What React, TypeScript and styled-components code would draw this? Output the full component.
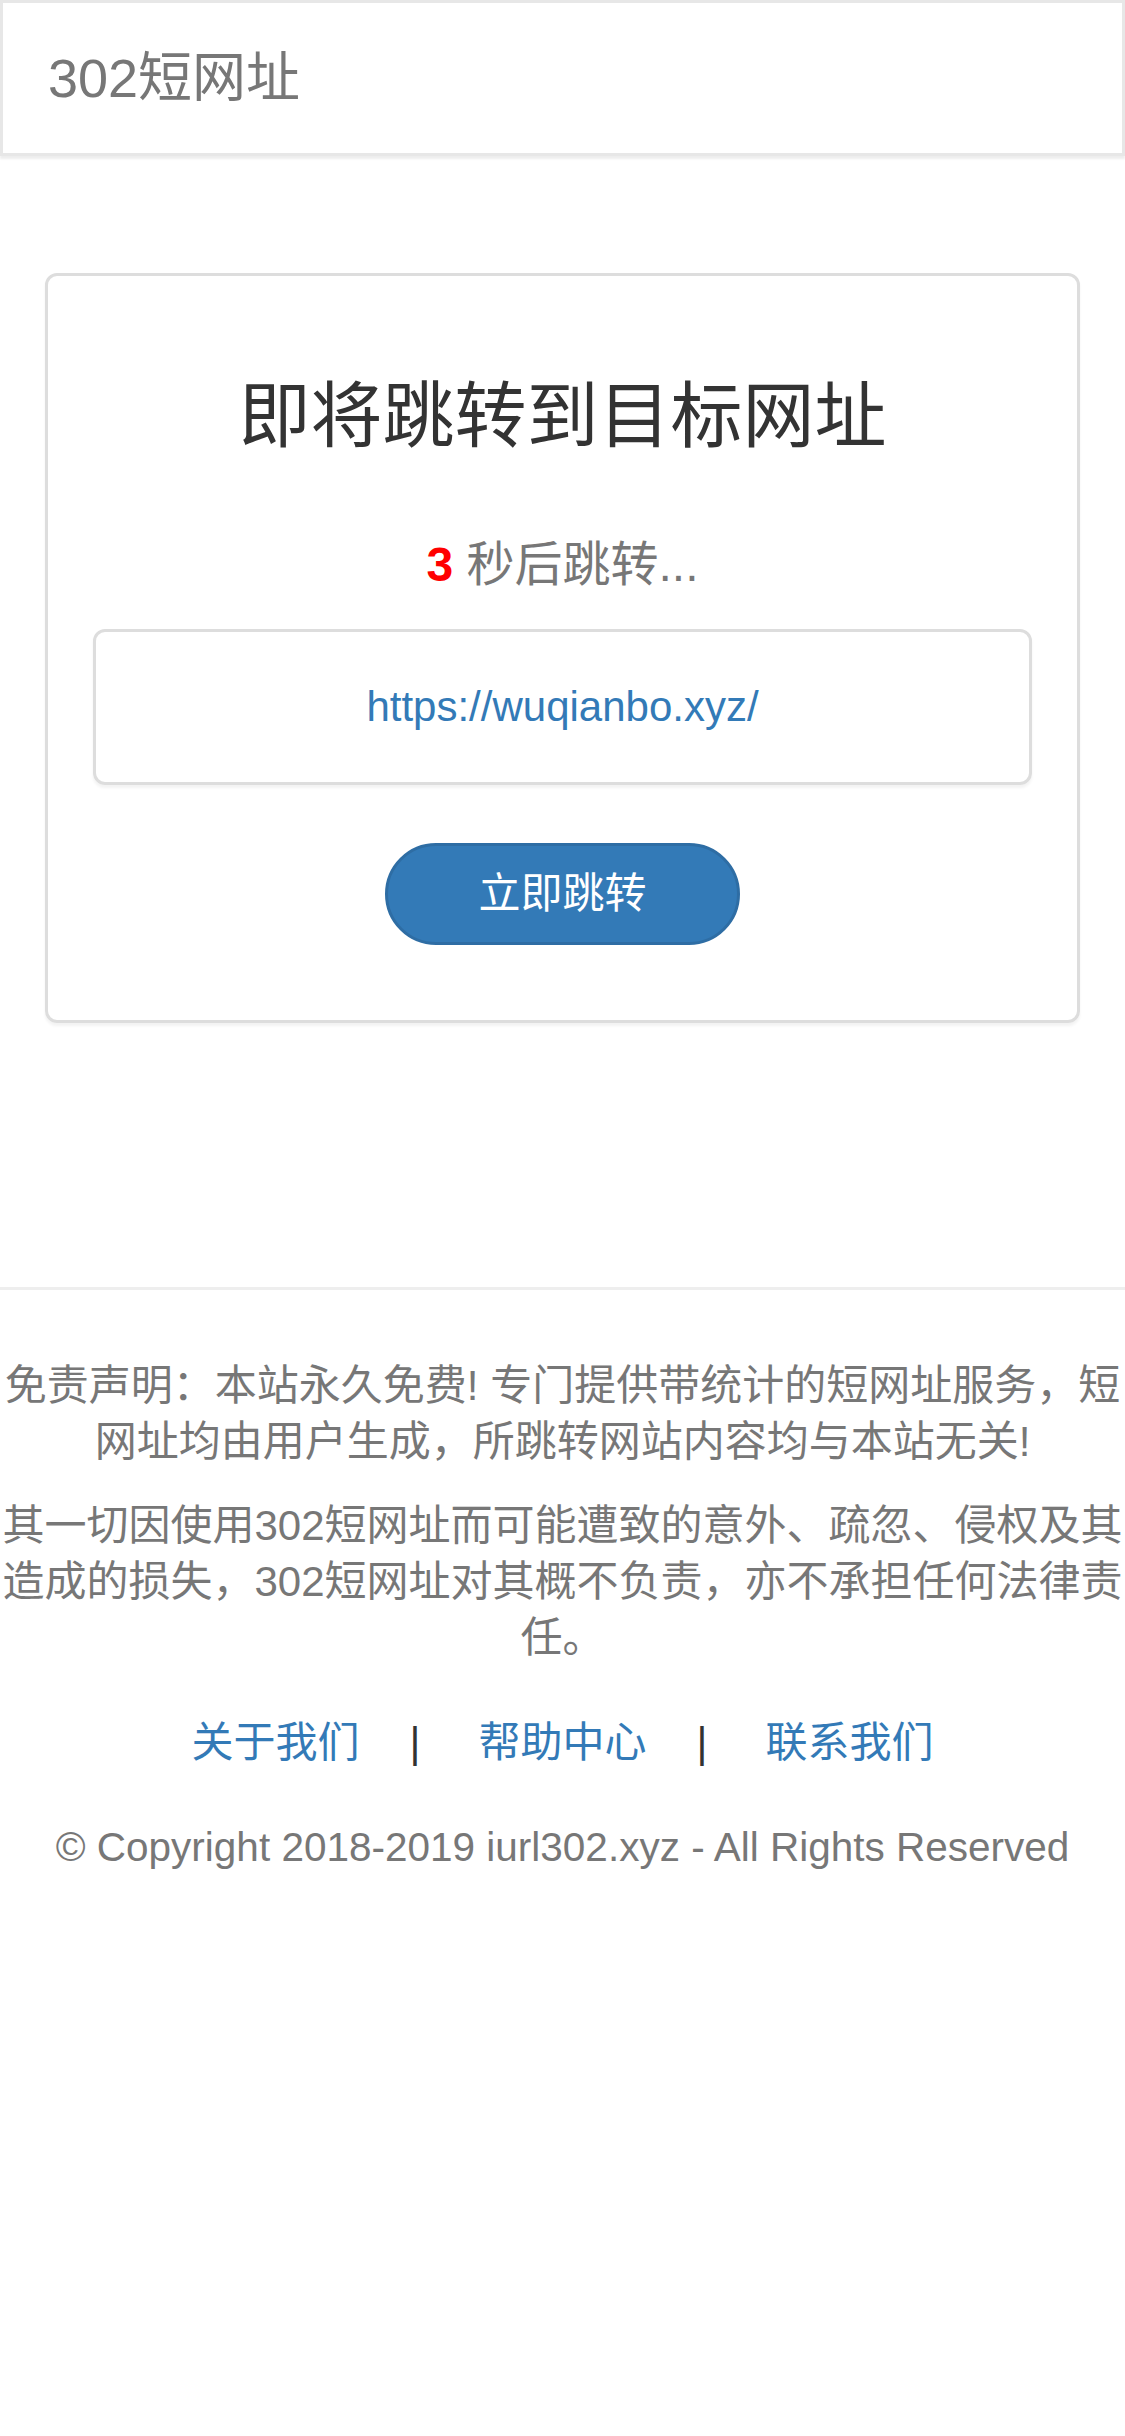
import React from "react";
import styled, { createGlobalStyle } from "styled-components";

const GlobalStyle = createGlobalStyle`
  * { box-sizing: border-box; }
  html, body {
    margin: 0;
    padding: 0;
    background: #fff;
  }
  body {
    font-family: "Liberation Sans", "Noto Sans CJK SC", sans-serif;
    font-size: 42px;
    line-height: 60px;
    color: #333;
  }
`;

const Navbar = styled.nav`
  height: 156px;
  border: 3px solid #e7e7e7;
  background: #fff;
  display: flex;
  align-items: center;
  padding: 0 45px;
  box-shadow: 0 3px 2px rgba(0, 0, 0, 0.07);
`;

const Brand = styled.a`
  font-size: 54px;
  line-height: 60px;
  color: #777;
  text-decoration: none;
`;

const Main = styled.main`
  padding: 117px 45px 0;
`;

const Card = styled.section`
  border: 3px solid #ddd;
  border-radius: 12px;
  box-shadow: 0 3px 3px rgba(0, 0, 0, 0.05);
  padding: 101px 45px 75px;
  display: flex;
  flex-direction: column;
  align-items: center;
`;

const Title = styled.h2`
  margin: 0;
  font-size: 72px;
  line-height: 79px;
  font-weight: 400;
  color: #333;
  text-align: center;
`;

const Countdown = styled.p`
  margin: 75px 0 0;
  font-size: 48px;
  line-height: 68px;
  color: #777;
  text-align: center;
`;

const Seconds = styled.span`
  color: #f00;
  font-weight: 700;
`;

const UrlBox = styled.div`
  margin-top: 30px;
  width: 100%;
  border: 3px solid #ddd;
  border-radius: 12px;
  box-shadow: 0 3px 3px rgba(0, 0, 0, 0.05);
  padding: 45px;
  text-align: center;
  font-size: 42px;
  line-height: 60px;
`;

const Link = styled.a`
  color: #337ab7;
  text-decoration: none;
`;

const GoButton = styled.button`
  margin-top: 58px;
  height: 102px;
  padding: 0 90px;
  border: 3px solid #2e6da4;
  border-radius: 51px;
  background: #337ab7;
  color: #fff;
  font-family: inherit;
  font-size: 42px;
  line-height: 60px;
  cursor: pointer;
`;

const Footer = styled.footer`
  margin-top: 264px;
  border-top: 3px solid #eee;
  padding-top: 68px;
  text-align: center;
  color: #777;
`;

const Disclaimer = styled.p`
  margin: 0 0 28px;
  font-size: 42px;
  line-height: 56px;
  color: #777;
`;

const LinkRow = styled.div`
  margin-top: 47px;
  display: flex;
  justify-content: center;
  align-items: center;
  font-size: 42px;
  line-height: 60px;
`;

const Separator = styled.span`
  color: #333;
  margin: 0 58px 0 50px;
`;

const Copyright = styled.p`
  margin: 44px 0 0;
  font-size: 40.5px;
  line-height: 60px;
  color: #777;
`;

export default function App() {
  return (
    <>
      <GlobalStyle />
      <Navbar>
        <Brand href="#">302短网址</Brand>
      </Navbar>
      <Main>
        <Card>
          <Title>即将跳转到目标网址</Title>
          <Countdown>
            <Seconds>3</Seconds> 秒后跳转...
          </Countdown>
          <UrlBox>
            <Link href="#">https://wuqianbo.xyz/</Link>
          </UrlBox>
          <GoButton type="button">立即跳转</GoButton>
        </Card>
      </Main>
      <Footer>
        <Disclaimer>
          免责声明：本站永久免费! 专门提供带统计的短网址服务，短网址均由用户生成，所跳转网站内容均与本站无关!
        </Disclaimer>
        <Disclaimer>
          其一切因使用302短网址而可能遭致的意外、疏忽、侵权及其造成的损失，302短网址对其概不负责，亦不承担任何法律责任。
        </Disclaimer>
        <LinkRow>
          <Link href="#">关于我们</Link>
          <Separator>|</Separator>
          <Link href="#">帮助中心</Link>
          <Separator>|</Separator>
          <Link href="#">联系我们</Link>
        </LinkRow>
        <Copyright>© Copyright 2018-2019 iurl302.xyz - All Rights Reserved</Copyright>
      </Footer>
    </>
  );
}
